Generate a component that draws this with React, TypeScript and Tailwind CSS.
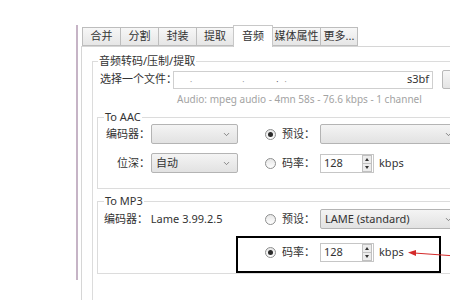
import { ChevronDown } from "lucide-react";

const tabs = [
  { label: "合并", w: "w-[39px]" },
  { label: "分割", w: "w-[39px]" },
  { label: "封装", w: "w-[39px]" },
  { label: "提取", w: "w-[38px]" },
  { label: "音频", w: "w-[40px]" },
  { label: "媒体属性", w: "w-[49px]" },
  { label: "更多...", w: "w-[38px]" },
];

const Radio = ({ checked = false }: { checked?: boolean }) => (
  <span className="w-[11px] h-[11px] shrink-0 rounded-full border border-[#8e8f8f] bg-gradient-to-b from-[#e6e6e6] to-white flex items-center justify-center">
    {checked && <span className="w-[5px] h-[5px] rounded-full bg-[#2b2b2b]" />}
  </span>
);

const Select = ({ value = "", className = "" }: { value?: string; className?: string }) => (
  <div
    className={`h-[20px] border border-[#b4b4b4] rounded-[2px] bg-gradient-to-b from-[#f4f4f4] to-[#e2e2e2] flex items-center pl-[4px] pr-[6px] ${className}`}
  >
    <span className="flex-1 truncate">{value}</span>
    <ChevronDown size={9} strokeWidth={2} className="text-[#666]" />
  </div>
);

const Spin = () => (
  <div className="flex items-center gap-[5px]">
    <div className="w-[54px] h-[19px] border border-[#c6c6c6] bg-white flex items-center">
      <span className="flex-1 pl-[3px]">128</span>
      <div className="w-[10px] h-[17px] mr-[1px] flex flex-col border border-[#c0c0c0] bg-[#ececec]">
        <span className="flex-1 flex items-center justify-center border-b border-[#c0c0c0]">
          <span className="w-0 h-0 border-x-[2.5px] border-x-transparent border-b-[3px] border-b-[#333]" />
        </span>
        <span className="flex-1 flex items-center justify-center">
          <span className="w-0 h-0 border-x-[2.5px] border-x-transparent border-t-[3px] border-t-[#333]" />
        </span>
      </div>
    </div>
    <span>kbps</span>
  </div>
);

export default function App() {
  return (
    <div className="w-[450px] h-[300px] bg-white overflow-hidden whitespace-nowrap text-[11px] text-[#333] font-['Noto_Sans','Noto_Sans_CJK_SC',sans-serif]">
      <div className="flex h-[280px] pt-[25px] pl-[76px]">
        <div className="w-[2px] shrink-0 bg-[#c6b4c6]" />
        <div className="w-[3px] shrink-0" />
        <div className="flex flex-col w-[440px] shrink-0">
          {/* tabs */}
          <div className="flex items-end h-[21px] pl-px">
            {tabs.map((t) => {
              const active = t.label === "音频";
              return (
                <div
                  key={t.label}
                  className={
                    active
                      ? `relative z-10 -mb-px -ml-px h-[22px] flex items-center justify-center border border-b-0 border-[#c8c8c8] bg-white ${t.w}`
                      : `h-[19px] flex items-center justify-center border border-[#bdbdbd] -ml-px first:ml-0 bg-gradient-to-b from-[#f7f7f7] to-[#e6e6e6] ${t.w}`
                  }
                >
                  {t.label}
                </div>
              );
            })}
          </div>
          {/* panel */}
          <div className="flex-1 border-l border-t border-[#d6d6d6] pt-[6px] pl-[10px]">
            <fieldset className="border border-[#dcdcdc] w-[440px] h-[300px]">
              <legend className="ml-[5px] px-px leading-[16px]">音频转码/压制/提取</legend>
              <div className="flex items-center mt-px pl-[7px]">
                <span className="w-[73px] shrink-0">选择一个文件：</span>
                <div className="w-[260px] h-[18px] shrink-0 border border-[#cfcfcf] bg-white flex items-center pl-[16px] pr-[3px] text-[#9a9a9a]">
                  <span className="text-[8px] leading-none mt-[4px]">·</span>
                  <span className="ml-[50px] text-[8px] leading-none mt-[4px]">·</span>
                  <span className="ml-[32px] text-[8px] leading-none mt-[4px] text-[#555]">·</span>
                  <span className="ml-[6px] text-[8px] leading-none mt-[4px]">·</span>
                  <span className="ml-auto text-[#333]">s3bf</span>
                </div>
                <div className="ml-[9px] w-[30px] h-[19px] shrink-0 border border-[#b8b8b8] rounded-[2px] bg-gradient-to-b from-[#f6f6f6] to-[#e4e4e4]" />
              </div>
              <div className="mt-[3px] pl-[84px] h-[15px] leading-[15px] text-[#a3a3a3] text-[10px]">
                Audio: mpeg audio - 4mn 58s - 76.6 kbps - 1 channel
              </div>

              {/* To AAC */}
              <fieldset className="mt-[3px] ml-[4px] border border-[#dcdcdc] w-[420px] pb-[15px]">
                <legend className="ml-[6px] px-px leading-[14px]">To AAC</legend>
                <div className="flex items-center">
                  <span className="w-[53px] shrink-0 text-right pr-[1px]">编码器：</span>
                  <Select className="w-[87px] shrink-0" />
                  <div className="ml-[27px] flex items-center">
                    <Radio checked />
                    <span className="ml-[6px] w-[38px]">预设：</span>
                    <Select className="w-[140px]" />
                  </div>
                </div>
                <div className="flex items-center mt-[9px]">
                  <span className="w-[53px] shrink-0 text-right pr-[1px]">位深：</span>
                  <Select value="自动" className="w-[87px] shrink-0" />
                  <div className="ml-[27px] flex items-center">
                    <Radio />
                    <span className="ml-[6px] w-[38px]">码率：</span>
                    <Spin />
                  </div>
                </div>
              </fieldset>

              {/* To MP3 */}
              <fieldset className="mt-[5px] ml-[4px] border border-[#dcdcdc] w-[420px] pb-[11px]">
                <legend className="ml-[6px] px-px leading-[14px]">To MP3</legend>
                <div className="flex items-center mt-px">
                  <span className="w-[167px] shrink-0 pl-[6px]">编码器： Lame 3.99.2.5</span>
                  <Radio />
                  <span className="ml-[6px] w-[38px]">预设：</span>
                  <Select value="LAME (standard)" className="w-[140px]" />
                </div>
                <div className="relative flex items-center mt-[14px] pl-[167px]">
                  <Radio checked />
                  <span className="ml-[6px] w-[38px]">码率：</span>
                  <Spin />
                  <div className="absolute left-[138px] -top-[7px] w-[205px] h-[37px] border-2 border-black" />
                  <svg className="absolute left-[310px] top-[5px]" width="50" height="12" viewBox="0 0 50 12">
                    <line x1="6" y1="5" x2="48" y2="8" stroke="#d42a2a" strokeWidth="1" />
                    <polygon points="0,4.6 8,2 8,8" fill="#d42a2a" />
                  </svg>
                </div>
              </fieldset>
            </fieldset>
          </div>
        </div>
      </div>
    </div>
  );
}
